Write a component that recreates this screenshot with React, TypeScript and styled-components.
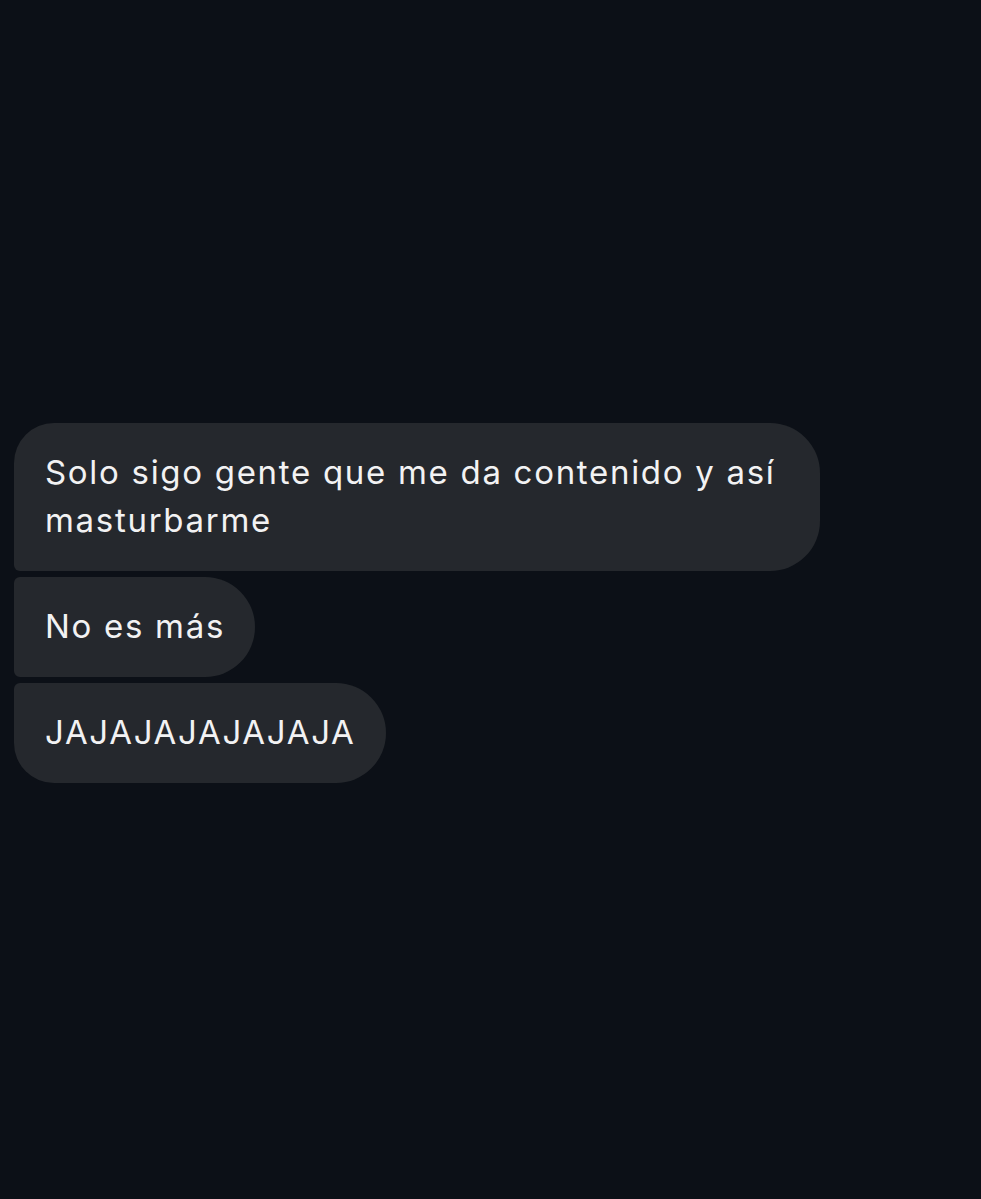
import React from "react";
import styled, { createGlobalStyle, css } from "styled-components";

const Global = createGlobalStyle`
  html, body { margin: 0; padding: 0; background: #0c1017; }
  body { font-family: Inter, "Noto Sans", sans-serif; -webkit-font-smoothing: antialiased; }
`;

const Screen = styled.div`
  width: 981px;
  height: 1199px;
  background: #0c1017;
  box-sizing: border-box;
  padding: 423px 0 0 14px;
  display: flex;
  flex-direction: column;
  align-items: flex-start;
  gap: 6px;
`;

type Pos = "first" | "middle" | "last";

const Bubble = styled.div<{ $pos: Pos }>`
  box-sizing: border-box;
  max-width: 806px;
  background: #25282d;
  color: #f2f2f3;
  font-size: 33px;
  line-height: 47.6px;
  letter-spacing: 1.7px;
  padding: 26.2px 30px 26.2px 31px;
  ${({ $pos }) =>
    $pos === "first"
      ? css`border-radius: 40px 50px 50px 6px;`
      : $pos === "middle"
      ? css`border-radius: 6px 50px 50px 6px;`
      : css`border-radius: 6px 50px 50px 40px;`}
`;

export default function App() {
  return (
    <>
      <Global />
      <Screen>
        <Bubble $pos="first">Solo sigo gente que me da contenido y así masturbarme</Bubble>
        <Bubble $pos="middle">No es más</Bubble>
        <Bubble $pos="last">JAJAJAJAJAJAJA</Bubble>
      </Screen>
    </>
  );
}
